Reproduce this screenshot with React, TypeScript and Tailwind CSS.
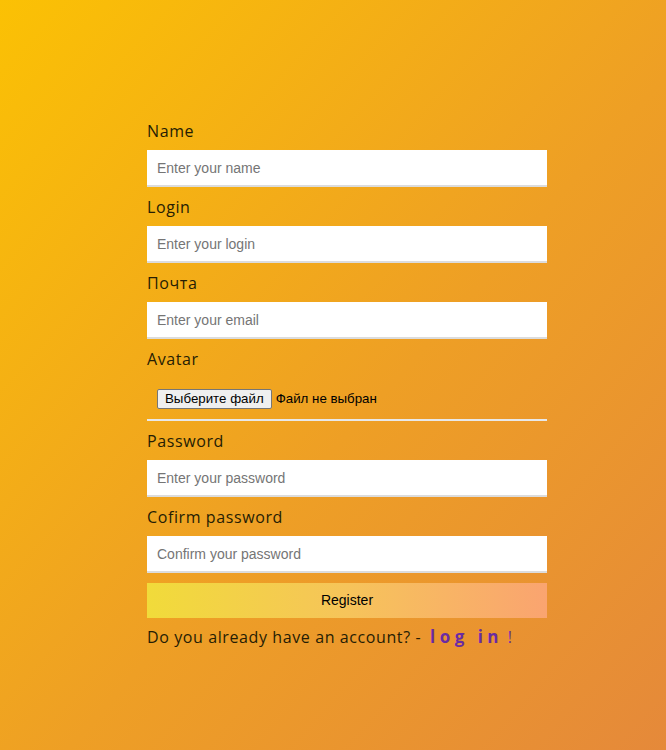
const fields = [
  { label: 'Name', placeholder: 'Enter your name', type: 'text' },
  { label: 'Login', placeholder: 'Enter your login', type: 'text' },
  { label: 'Почта', placeholder: 'Enter your email', type: 'email' },
];

const passwords = [
  { label: 'Password', placeholder: 'Enter your password' },
  { label: 'Cofirm password', placeholder: 'Confirm your password' },
];

function Field({ label, placeholder, type }: { label: string; placeholder: string; type: string }) {
  return (
    <div className="flex flex-col mb-[8px]">
      <label className="text-[16px] leading-6 text-[#261d04] font-['Open_Sans',sans-serif] tracking-[0.6px]">{label}</label>
      <input
        type={type}
        placeholder={placeholder}
        className="mt-[7px] h-[37px] w-full bg-white px-[10px] border-b-2 border-[#dcdcdc] outline-none text-[14px] font-['Liberation_Sans',Arial,sans-serif] placeholder:text-[#757575]"
      />
    </div>
  );
}

export default function App() {
  return (
    <div className="min-h-screen w-full bg-[linear-gradient(to_bottom_right,#fbc104,#ee9f25_55%,#e5893a)]">
      <form className="w-[400px] ml-[147px] pt-[119px] pb-[90px]">
        {fields.map((f) => (
          <Field key={f.label} {...f} />
        ))}

        <div className="flex flex-col mb-[8px]">
          <label className="text-[16px] leading-6 text-[#261d04] font-['Open_Sans',sans-serif] tracking-[0.6px]">Avatar</label>
          <div className="mt-[7px] h-[43px] flex items-center px-[10px] border-b-2 border-[#e8e8e8] font-['Liberation_Sans',Arial,sans-serif] text-[13.3px] text-black">
            <span className="h-[20px] px-[7px] flex items-center bg-[#efefef] border border-[#767676] rounded-[2px]">Выберите файл</span>
            <span className="ml-[4px]">Файл не выбран</span>
          </div>
        </div>

        {passwords.map((f) => (
          <Field key={f.label} label={f.label} placeholder={f.placeholder} type="password" />
        ))}

        <button
          type="button"
          className="mt-[2px] h-[35px] w-full bg-[linear-gradient(to_right,#f1db3a,#f6c45a_50%,#faa470)] text-[14px] text-black font-['Liberation_Sans',Arial,sans-serif]"
        >
          Register
        </button>

        <p className="mt-[7px] text-[16px] leading-6 text-[#261d04] font-['Open_Sans',sans-serif] tracking-[0.6px]">
          Do you already have an account? -{' '}
          <a className="ml-[4px] text-[17px] font-bold text-[#6a2ba3] tracking-[4.5px]">log in</a>
          <span className="text-[#6a2ba3]"> !</span>
        </p>
      </form>
    </div>
  );
}
